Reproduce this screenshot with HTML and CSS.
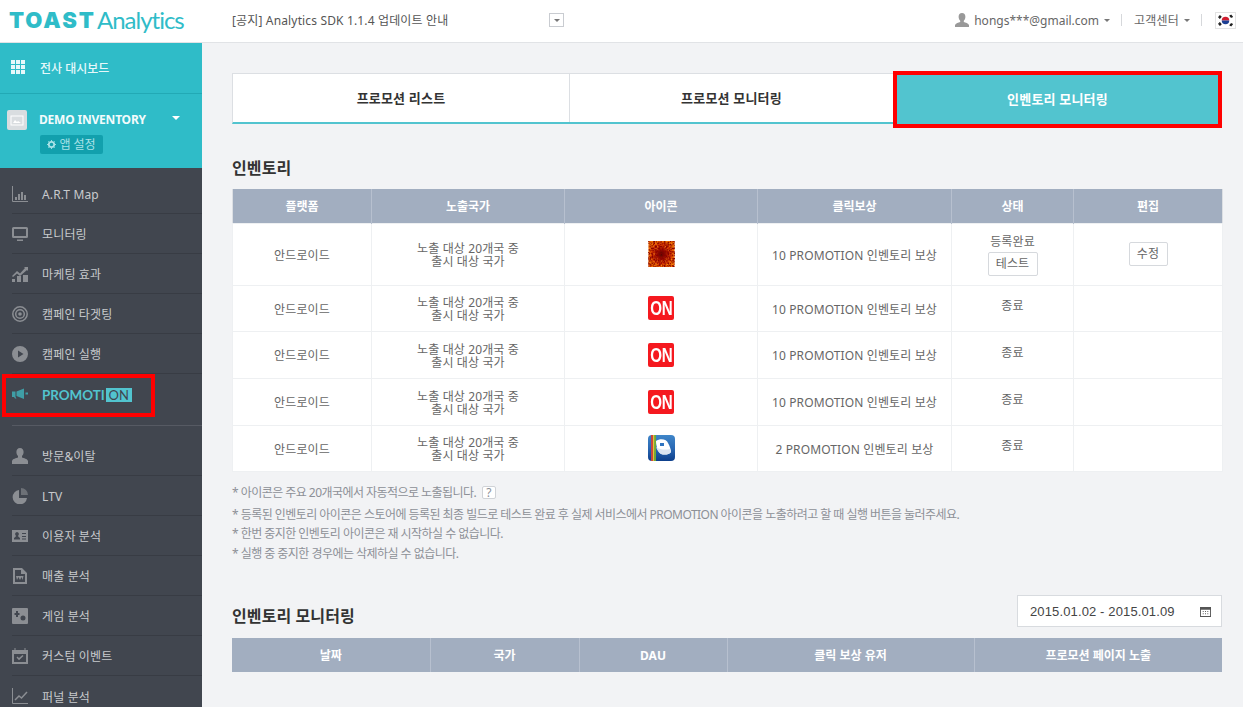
FILE: index.html
```html
<!DOCTYPE html>
<html lang="ko">
<head>
<meta charset="utf-8">
<title>TOAST Analytics</title>
<link rel="stylesheet" href="styles.css">
</head>
<body>
<header class="topbar">
  <div class="logo"><span class="logo-toast">TOAST</span><span class="logo-name">Analytics</span></div>
  <div class="notice">
    <span>[공지] Analytics SDK 1.1.4 업데이트 안내</span>
    <span class="notice-btn"><i class="tri"></i></span>
  </div>
  <div class="account">
    <svg class="user-ic" viewBox="0 0 16 16"><path d="M8 1c2.2 0 3.4 1.6 3.4 3.7 0 1.8-.8 3.3-1.6 4v1.2c1.6.6 4.7 1.300 5.200 3V15H1v-2.100c.5-1.700 3.600-2.400 5.200-3V8.700c-.8-.7-1.600-2.200-1.600-4C4.600 2.600 5.800 1 8 1z"/></svg>
    <span class="email">hongs***@gmail.com</span><i class="tri tri-gap"></i>
    <span class="sep"></span>
    <span class="help-center">고객센터</span><i class="tri tri-gap"></i>
    <span class="sep"></span>
    <span class="flag"><svg viewBox="0 0 20 16" width="20" height="16"><rect width="20" height="16" fill="#fff"/><path d="M6 8a4 4 0 0 1 8 0z" fill="#d01c2f"/><path d="M6 8a4 4 0 0 0 8 0z" fill="#1b3f94"/><g stroke="#222" stroke-width="1.400"><path d="M2.500 5l2-2.500M3.500 6l2-2.500M14.500 2.500l2 2.500M15.500 2l2 2.500M2.500 11l2 2.500M3.500 10l2 2.500M14.500 13.500l2-2.500M15.500 14l2-2.500"/></g></svg></span>
  </div>
</header>
<div class="layout">
  <nav class="sidebar">
    <div class="brand-block">
      <a class="dash">
        <svg class="ic-dash" viewBox="0 0 14 14"><path d="M0 0h4v4H0zM5 0h4v4H5zM10 0h4v4h-4zM0 5h4v4H0zM5 5h4v4H5zM10 5h4v4h-4zM0 10h4v4H0zM5 10h4v4H5zM10 10h4v4h-4z"/></svg>
        <span>전사 대시보드</span>
      </a>
      <div class="app">
        <div class="app-row">
          <span class="app-thumb"><svg viewBox="0 0 20 20"><rect x="4" y="6" width="12" height="9" fill="none" stroke="#fff" stroke-width="1"/><path d="M6 13l2-3 2 2 1-1 3 2z" fill="#fff"/></svg></span>
          <span class="app-name">DEMO INVENTORY</span>
          <i class="app-caret"></i>
        </div>
        <span class="app-set"><svg viewBox="0 0 10 10"><circle cx="5" cy="5" r="3" fill="none" stroke="currentColor" stroke-width="2"/><path d="M5 0v2M5 8v2M0 5h2M8 5h2M1.500 1.500l1.400 1.400M7.100 7.100l1.400 1.400M1.500 8.500l1.400-1.400M7.100 2.900l1.400-1.400" stroke="currentColor"/></svg>앱 설정</span>
      </div>
    </div>
    <ul class="menu menu-first">
      <li><svg viewBox="0 0 16 16"><path d="M.5 0v15.500H16" fill="none" stroke="currentColor"/><path d="M3 11h2v3H3zM6 8h2v6H6zM9 6h2v8H9zM12 9h2v5h-2z"/></svg><span>A.R.T Map</span></li>
      <li><svg viewBox="0 0 16 16"><path d="M1.500 1h13A1.500 1.500 0 0 1 16 2.500v8a1.500 1.500 0 0 1-1.500 1.500h-13A1.500 1.500 0 0 1 0 10.500v-8A1.500 1.500 0 0 1 1.500 1zM2 3v7h12V3zM5 13.500h6V15H5z" fill-rule="evenodd"/></svg><span>모니터링</span></li>
      <li><svg viewBox="0 0 16 16"><path d="M0 13h3v3H0zM5 10h4v6H5zM11 9h5v7h-5zM0 10l5-5 3 2.500L13 2l-1-1h4v4l-1-1-7 6-3-2.500L1 11z"/></svg><span>마케팅 효과</span></li>
      <li><svg viewBox="0 0 16 16"><circle cx="8" cy="8" r="7.200" fill="none" stroke="currentColor" stroke-width="1.500"/><circle cx="8" cy="8" r="4.300" fill="none" stroke="currentColor" stroke-width="1.500"/><circle cx="8" cy="8" r="1.800"/></svg><span>캠페인 타겟팅</span></li>
      <li><svg viewBox="0 0 16 16"><path d="M8 0a8 8 0 1 1 0 16A8 8 0 0 1 8 0zM6 4.500v7L11.500 8z" fill-rule="evenodd"/></svg><span>캠페인 실행</span></li>
      <li class="promo"><svg viewBox="0 0 16 16"><path d="M0 5.500h3.500v5.500l1 1.500H3L2 11H0zM4.500 5.500L12 2.500v10.500l-7.500-3zM13.500 6.500H16v2h-2.500z"/></svg><span class="promo-text">PROMOTI<b>ON</b></span></li>
    </ul>
    <ul class="menu">
      <li><svg viewBox="0 0 16 16"><path d="M8 0c2.400 0 3.600 1.800 3.600 4 0 1.800-.8 3.300-1.600 4v1.500c1.800.7 5.300 1.300 6 3.500v3H0v-3c.7-2.200 4.200-2.800 6-3.500V8c-.8-.7-1.600-2.200-1.600-4C4.400 1.800 5.600 0 8 0z"/></svg><span>방문&amp;이탈</span></li>
      <li><svg viewBox="0 0 16 16"><path d="M7 2v8h8a7.200 7.200 0 1 1-8-8z"/><path d="M9 0a7 7 0 0 1 7 7H9z" opacity=".6"/></svg><span>LTV</span></li>
      <li><svg viewBox="0 0 16 16"><path d="M0 2h16v12H0zM5 4a2 2 0 0 0-1.200 3.500V8.500L2 10v1.500h6V10L6.200 8.500v-1A2 2 0 0 0 5 4zM10 5v1h4V5zM10 8v1h4V8zM10 10.500v1h4v-1z" fill-rule="evenodd"/></svg><span>이용자 분석</span></li>
      <li><svg viewBox="0 0 16 16"><path d="M1 0h9l5 5v11H1zM3 2v12h10V6H9V2zM4 8l1 4 1.500-3 1.500 3 1.500-3 1 3 1-4h-7z" fill-rule="evenodd"/></svg><span>매출 분석</span></li>
      <li><svg viewBox="0 0 16 16"><path d="M1 0h14a1 1 0 0 1 1 1v14a1 1 0 0 1-1 1H1a1 1 0 0 1-1-1V1a1 1 0 0 1 1-1zM4 3v2H2.500v2H4v2h2V7h1.500V5H6V3zM11 7.500a2.500 2.500 0 1 0 0 5 2.500 2.500 0 0 0 0-5z" fill-rule="evenodd"/></svg><span>게임 분석</span></li>
      <li><svg viewBox="0 0 16 16"><path d="M0 2h2.500V0h1v2h9V0h1v2H16v14H0zM2 6v8h12V6zM4.500 9.500l1-1L7 10l3.500-3 1 1L7 12.300z" fill-rule="evenodd"/></svg><span>커스텀 이벤트</span></li>
      <li><svg viewBox="0 0 16 16"><path d="M.5 0v15.500H16" fill="none" stroke="currentColor"/><path d="M3 12l4-4 2.500 2L15 4" fill="none" stroke="currentColor" stroke-width="1.500"/></svg><span>퍼널 분석</span></li>
    </ul>
    <span class="mark mark-promo"></span>
  </nav>
  <main class="content">
    <div class="tabs">
      <a class="tab tab-a">프로모션 리스트</a>
      <a class="tab tab-b">프로모션 모니터링</a>
      <a class="tab tab-c">인벤토리 모니터링<span class="mark mark-tab"></span></a>
    </div>

    <h2 class="title title-first">인벤토리</h2>
    <table class="grid inv">
      <colgroup><col class="c1"><col class="c2"><col class="c3"><col class="c4"><col class="c5"><col class="c6"></colgroup>
      <thead><tr><th>플랫폼</th><th>노출국가</th><th>아이콘</th><th>클릭보상</th><th>상태</th><th>편집</th></tr></thead>
      <tbody>
        <tr class="r1">
          <td>안드로이드</td><td>노출 대상 20개국 중<br>출시 대상 국가</td>
          <td class="icon-cell"><svg class="app-ic" viewBox="0 0 27 27"><defs><radialGradient id="fl"><stop offset="0" stop-color="#4c0300"/><stop offset=".35" stop-color="#a01000"/><stop offset=".75" stop-color="#d83a00"/><stop offset="1" stop-color="#f07000"/></radialGradient><filter id="grain" x="0" y="0" width="100%" height="100%"><feTurbulence type="fractalNoise" baseFrequency=".55" numOctaves="2" seed="4"/><feColorMatrix values="0 0 0 0 .25 0 0 0 0 0 0 0 0 0 0 2.600 0 0 0 -.9"/></filter></defs><rect width="27" height="27" fill="url(#fl)"/><g stroke="#ff9a1e" stroke-width="1" stroke-dasharray="2 2" opacity=".75"><path d="M13.500 7V0M13.500 20v7M7 13.500H0M20 13.500h7M9 9L1 1M18 9l8-8M9 18l-8 8M18 18l8 8M10 7L6 0M17 7l4-7M10 20l-4 7M17 20l4 7M7 10L0 6M7 17l-7 4M20 10l7-4M20 17l7 4"/></g><rect width="27" height="27" filter="url(#grain)"/></svg></td>
          <td>10 PROMOTION 인벤토리 보상</td>
          <td class="state-cell"><div class="state-top">등록완료</div><a class="btn btn-test">테스트</a></td>
          <td class="edit-cell"><a class="btn">수정</a></td>
        </tr>
        <tr class="r2"><td>안드로이드</td><td>노출 대상 20개국 중<br>출시 대상 국가</td><td class="icon-cell"><span class="on-ic"><span>ON</span></span></td><td>10 PROMOTION 인벤토리 보상</td><td class="state">종료</td><td></td></tr>
        <tr class="r3"><td>안드로이드</td><td>노출 대상 20개국 중<br>출시 대상 국가</td><td class="icon-cell"><span class="on-ic"><span>ON</span></span></td><td>10 PROMOTION 인벤토리 보상</td><td class="state">종료</td><td></td></tr>
        <tr class="r3"><td>안드로이드</td><td>노출 대상 20개국 중<br>출시 대상 국가</td><td class="icon-cell"><span class="on-ic"><span>ON</span></span></td><td>10 PROMOTION 인벤토리 보상</td><td class="state">종료</td><td></td></tr>
        <tr class="r2"><td>안드로이드</td><td>노출 대상 20개국 중<br>출시 대상 국가</td>
          <td class="icon-cell"><svg class="app-ic" viewBox="0 0 27 26"><defs><linearGradient id="bl" x1="0" y1="0" x2="0" y2="1"><stop offset="0" stop-color="#3f86c9"/><stop offset=".5" stop-color="#2a69b4"/><stop offset="1" stop-color="#0d3f8b"/></linearGradient></defs><rect width="27" height="26" rx="4" fill="url(#bl)"/><path d="M3 0h2v26H3z" fill="#c8473e"/><path d="M5 0h1.500v26H5z" fill="#e3c72c"/><path d="M6.500 0H8v26H6.500z" fill="#6fae2c"/><path d="M8 6c4-3 11-2 12 2 2 3 3 7 3 9-2 3-7 3-10 2-3-2-5-8-5-13z" fill="#fff"/><path d="M8 12c4 3 10 3 14 2l1 3c-2 3-7 3-10 2-2-1-4-4-5-7z" fill="#dbe5f1"/><rect x="12" y="8" width="4" height="3" fill="#2f74c0"/></svg></td>
          <td>2 PROMOTION 인벤토리 보상</td><td class="state">종료</td><td></td></tr>
      </tbody>
    </table>

    <ul class="notes">
      <li class="note-first">* 아이콘은 주요 20개국에서 자동적으로 노출됩니다. <span class="help">?</span></li>
      <li>* 등록된 인벤토리 아이콘은 스토어에 등록된 최종 빌드로 테스트 완료 후 실제 서비스에서 PROMOTION 아이콘을 노출하려고 할 때 실행 버튼을 눌러주세요.</li>
      <li>* 한번 중지한 인벤토리 아이콘은 재 시작하실 수 없습니다.</li>
      <li>* 실행 중 중지한 경우에는 삭제하실 수 없습니다.</li>
    </ul>

    <div class="section-head">
      <h2 class="title title-mon">인벤토리 모니터링</h2>
      <div class="date">
        <span>2015.01.02 - 2015.01.09</span>
        <svg viewBox="0 0 12 12"><path d="M0 1h12v11H0zM1 4v7h10V4z" fill-rule="evenodd"/><path d="M3 5.500h1v1H3zM5.500 5.500h1v1h-1zM8 5.500h1v1H8zM3 8h1v1H3zM5.500 8h1v1h-1zM8 8h1v1H8z"/></svg>
      </div>
    </div>
    <table class="grid mon">
      <colgroup><col class="m1"><col class="m2"><col class="m3"><col class="m4"><col class="m5"></colgroup>
      <thead><tr><th>날짜</th><th>국가</th><th>DAU</th><th>클릭 보상 유저</th><th>프로모션 페이지 노출</th></tr></thead>
    </table>
  </main>
</div>
</body>
</html>
```
FILE: styles.css
```css
* { box-sizing: border-box; }
html, body { margin: 0; height: 707px; overflow: hidden; }
body {
  font-family: "Noto Sans", "Noto Sans CJK KR", sans-serif;
  font-size: 12px;
  color: #666;
  background: #f2f3f5;
}
ul { list-style: none; margin: 0; padding: 0; }
i { display: inline-block; font-style: normal; }

.topbar {
  height: 43px;
  background: #fff;
  border-bottom: 1px solid #e1e3e6;
  display: flex;
  align-items: center;
  padding-bottom: 2px;
}
.logo { width: 232px; padding-left: 9px; display: flex; align-items: center; color: #2fbcc8; }
.logo-toast { font-family: Inter, sans-serif; font-weight: 900; font-size: 22px; letter-spacing: 2px; line-height: 1; }
.logo-name { font-family: Lato, sans-serif; font-size: 24px; margin-left: 1px; line-height: 1; letter-spacing: -1px; }
.notice { width: 332px; display: flex; justify-content: space-between; align-items: center; color: #555; letter-spacing: .15px; }
.notice-btn { width: 15px; height: 14px; border: 1px solid #c9ccd1; display: flex; align-items: center; justify-content: center; }
.tri { width: 0; height: 0; border: 3px solid transparent; border-top: 3px solid #777; border-bottom: 0; }
.tri-gap { margin-left: 5px; }
.account { margin-left: auto; display: flex; align-items: center; color: #666; padding-right: 7px; }
.user-ic { width: 16px; height: 16px; fill: #999; margin-right: 4px; }
.help-center { letter-spacing: .2px; }
.sep { width: 1px; height: 12px; background: #d6d8db; margin: 0 12px 0 11px; }
.flag { width: 21px; height: 17px; border: 1px solid #e3e3e3; display: flex; margin-left: 1px; }
.flag svg { width: 19px; height: 15px; }

.layout { display: flex; height: 664px; }
.sidebar { width: 202px; flex: none; background: #41464f; position: relative; color: #c8cacd; }
.brand-block { background: #2fbcc8; height: 125px; color: #fff; }
.dash { height: 51px; display: flex; align-items: center; padding: 0 0 2px 11px; font-weight: 500; border-bottom: 1px solid #22a9b5; color: #e6f8fa; }
.dash span { margin-top: 2px; }
.ic-dash { width: 14px; height: 14px; fill: #e6f8fa; margin-right: 15px; }
.app { padding: 16px 0 0 7px; }
.app-row { display: flex; align-items: center; height: 20px; }
.app-thumb { width: 20px; height: 20px; border-radius: 2px; background: #d9dde0; display: flex; margin-right: 12px; }
.app-name { font-weight: 700; color: #f2fbfc; font-size: 12px; width: 133px; letter-spacing: -.2px; margin-top: -2px; }
.app-caret { width: 0; height: 0; border: 4px solid transparent; border-top: 4px solid #fff; border-bottom: 0; margin-top: -4px; }
.app-set { margin: 5px 0 0 33px; width: 63px; height: 19px; background: #12a0ad; border-radius: 2px; color: #a9e2e7; display: flex; align-items: center; justify-content: center; gap: 3px; padding-bottom: 2px; }
.app-set svg { width: 9px; height: 9px; margin-top: 2px; }

.menu { padding-left: 12px; }
.menu-first { border-bottom: 1px solid #565a63; margin-left: 12px; padding-left: 0; }
.menu li { height: 40px; display: flex; align-items: center; border-bottom: 1px solid #383c44; }
.menu li span { margin-top: 1px; letter-spacing: .15px; }
.menu-first li { padding-left: 0; }
.menu li:last-child { border-bottom: 0; }
.menu svg { width: 16px; height: 16px; fill: #8b8e93; color: #8b8e93; margin-right: 14px; flex: none; }
.menu-first li:first-child { height: 46px; padding-top: 6px; }
.menu + .menu { padding-top: 10px; }
.menu .promo { height: 51px; padding-bottom: 11px; }
.promo svg { fill: #3f9ea6; color: #3f9ea6; }
.menu li .promo-text { font-family: Lato, sans-serif; font-weight: 700; font-size: 13.400px; color: #52c4cf; letter-spacing: 0; }
.promo-text b { display: inline-block; background: #52c4cf; color: #41464f; font-weight: 400; font-size: 13px; line-height: 14px; width: 26px; text-align: center; margin-left: 1px; }

.mark { position: absolute; border: 4px solid #f00; pointer-events: none; }
.mark-promo { left: 2px; top: 331px; width: 153px; height: 43px; }

.content { flex: 1; padding: 30px 21px 0 30px; min-width: 0; }
.tabs { display: flex; height: 51px; background: #fff; border: 1px solid #dcdfe3; border-bottom: 2px solid #52c4cf; border-width: 1px 0 2px 1px; }
.tab { display: flex; align-items: center; justify-content: center; font-weight: 700; font-size: 13px; letter-spacing: .2px; color: #333; position: relative; padding-bottom: 1px; }
.tab-a { width: 337px; border-right: 1px solid #dcdfe3; }
.tab-b { width: 323px; }
.tab-c { flex: 1; background: #52c4cf; color: #fff; margin-top: -1px; margin-bottom: -2px; }
.mark-tab { left: 0; right: 0; top: -2px; bottom: -4px; }

.title { margin: 0; font-size: 16px; line-height: 24px; font-weight: 700; color: #333; letter-spacing: .1px; }
.title-first { margin: 32px 0 9px; }
.title-mon { margin-bottom: -1px; }

.grid { width: 990px; border-collapse: collapse; table-layout: fixed; text-align: center; }
.grid th { height: 34px; background: #a2aec0; color: #fff; font-weight: 700; padding: 0; border-left: 1px solid #b7c0cf; }
.grid th:first-child { border-left: 0; }
.inv { background: #fff; border: 1px solid #dcdfe3; border-top: 0; }
.inv td { padding: 2px 0 0; line-height: 13px; border: 1px solid #eef0f2; color: #666; letter-spacing: .12px; }
.inv .icon-cell, .inv .edit-cell { padding: 0; }
.c1 { width: 139px; } .c2 { width: 193px; } .c3 { width: 193px; } .c4 { width: 194px; } .c5 { width: 122px; } .c6 { width: 149px; }
.m1 { width: 198px; } .m2 { width: 149px; } .m3 { width: 148px; } .m4 { width: 247px; } .m5 { width: 248px; }
.r1 td { height: 62px; }
.r2 td { height: 46px; }
.r3 td { height: 47px; }
.inv .state { padding: 0 0 5px; }
.state-top { line-height: 15px; }
.btn { display: inline-block; width: 39px; height: 24px; line-height: 21px; border: 1px solid #d6d9dd; border-radius: 2px; background: #fff; color: #666; }
.btn-test { width: 50px; margin-top: 3px; }
.app-ic { width: 27px; height: 26px; display: block; margin: 0 auto; }
.on-ic { display: flex; width: 26px; height: 24px; margin: 0 auto; background: #f5191f; border-radius: 2px; color: #fff; font-family: "Liberation Sans", sans-serif; font-weight: 700; font-size: 21px; line-height: 24px; justify-content: center; overflow: hidden; }
.on-ic span { display: block; transform: scaleX(.72); letter-spacing: -.5px; }

.notes { margin-top: 10px; color: #8d9097; font-size: 12px; letter-spacing: -.54px; }
.notes li { line-height: 19.500px; }
.notes .note-first { line-height: 22px; height: 23px; }
.help { display: inline-block; width: 14px; height: 13px; line-height: 11px; border: 1px solid #d0d3d7; border-radius: 2px; background: #fff; text-align: center; margin-left: 3px; letter-spacing: 0; }

.section-head { margin-top: 32px; display: flex; justify-content: space-between; align-items: flex-end; }
.date { width: 205px; height: 32px; background: #fff; border: 1px solid #d8dbdf; display: flex; align-items: center; justify-content: space-between; padding: 0 10px 0 12px; font-family: "Liberation Sans", sans-serif; font-size: 13px; letter-spacing: .13px; color: #444; }
.date svg { width: 11px; height: 11px; fill: #555; }
.mon { margin-top: 11px; }
```
